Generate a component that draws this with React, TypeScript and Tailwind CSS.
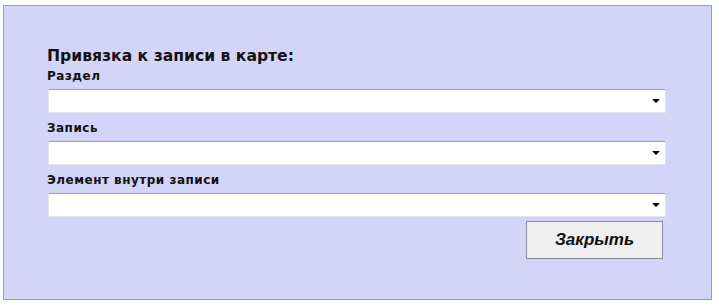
import React from "react";

const fields = ["Раздел", "Запись", "Элемент внутри записи"];

const SelectBox = () => (
  <div className="relative h-[24px] w-[618px] border border-[#e4e4ee] border-t-[#a0a0a8] bg-white">
    <span className="absolute right-[5px] top-[9px] h-0 w-0 border-x-[4px] border-t-[4px] border-x-transparent border-t-black" />
  </div>
);

export default function App() {
  return (
    <div className="h-[308px] w-[719px] bg-white pl-[3px] pt-[5px]" style={{ fontFamily: "'DejaVu Sans', Verdana, sans-serif" }}>
      <div className="flex h-[295px] w-[709px] flex-col border border-[#9a98c8] bg-[#d4d4f8] pl-[43px] pt-[40px]">
        <h2 className="text-[15.6px] font-bold leading-[20px] text-[#111]">Привязка к записи в карте:</h2>
        {fields.map((f, i) => (
          <div key={f} className={i === 0 ? "mt-[2px]" : "mt-[7px]"}>
            <div className="text-[12px] font-bold leading-[17px] tracking-[0.5px] text-[#111]">{f}</div>
            <div className="mt-[4px] pl-[1px]">
              <SelectBox />
            </div>
          </div>
        ))}
        <div className="mt-[4px] flex w-[616px] justify-end">
          <button
            className="h-[38px] w-[137px] border border-[#8a8aa0] bg-[#efefef] text-[17px] font-bold italic text-[#111]"
            style={{ fontFamily: "'Liberation Sans', Arial, sans-serif" }}
          >
            Закрыть
          </button>
        </div>
      </div>
    </div>
  );
}
